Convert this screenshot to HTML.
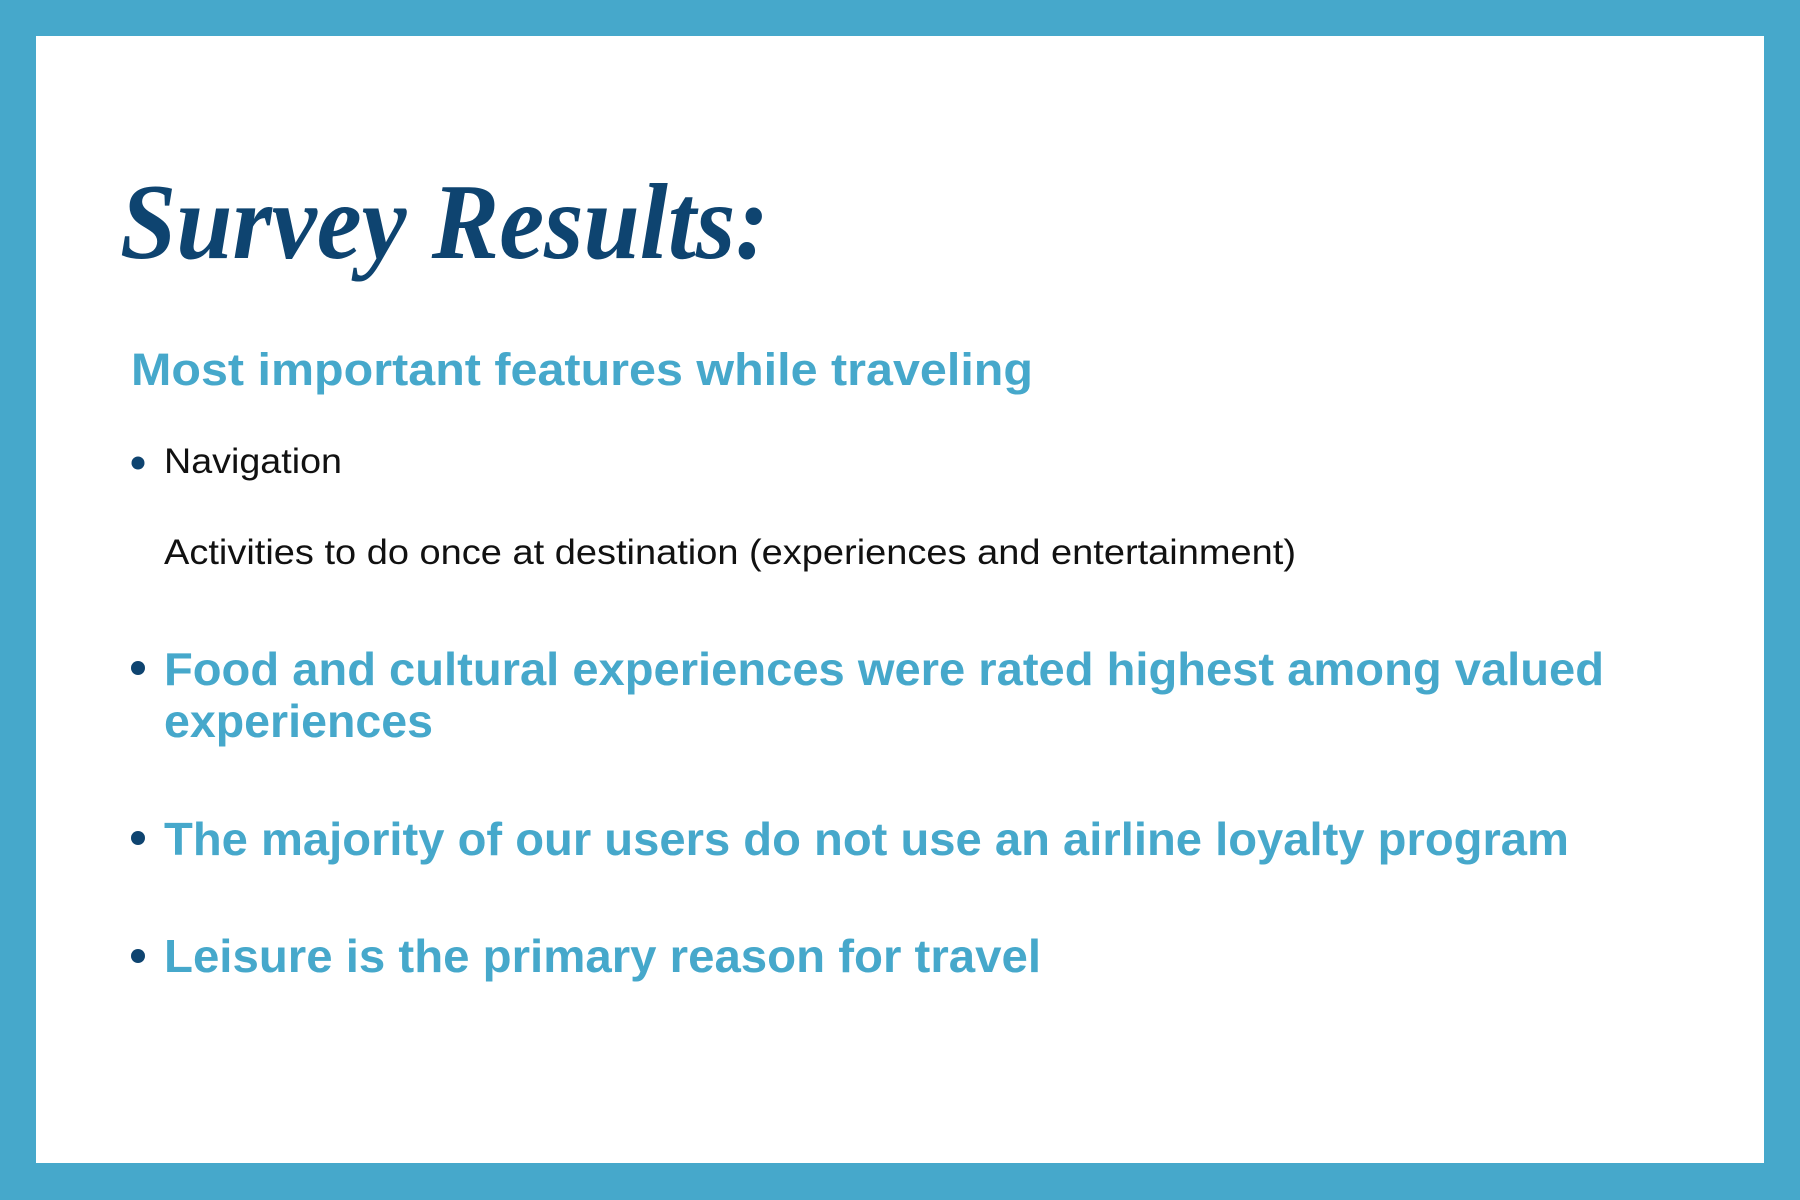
<!DOCTYPE html>
<html><head><meta charset="utf-8"><style>html,body{margin:0;padding:0;width:1800px;height:1200px;overflow:hidden;background:#46a8cb}</style></head>
<body>
<svg width="1800" height="1200" viewBox="0 0 1800 1200" xmlns="http://www.w3.org/2000/svg">
<rect width="1800" height="1200" fill="#46a8cb"/>
<rect x="36" y="36" width="1728" height="1127" fill="#ffffff"/>
<text x="120" y="258" font-family="Liberation Serif, serif" font-weight="bold" font-style="italic" font-size="108" fill="#0e4470" textLength="649" lengthAdjust="spacingAndGlyphs">Survey Results:</text>
<g font-family="Liberation Sans, sans-serif">
<text x="131" y="385" font-size="45" font-weight="bold" fill="#46a8cb" textLength="902" lengthAdjust="spacingAndGlyphs">Most important features while traveling</text>
<circle cx="138" cy="463" r="6.5" fill="#0e4470"/>
<text x="164" y="473" font-size="35" fill="#111" textLength="178" lengthAdjust="spacingAndGlyphs">Navigation</text>
<text x="164" y="564" font-size="35" fill="#111" textLength="1132" lengthAdjust="spacingAndGlyphs">Activities to do once at destination (experiences and entertainment)</text>
<circle cx="138" cy="668" r="7" fill="#0e4470"/>
<text x="164" y="685" font-size="46" font-weight="bold" fill="#46a8cb" textLength="1440" lengthAdjust="spacingAndGlyphs">Food and cultural experiences were rated highest among valued</text>
<text x="164" y="737" font-size="46" font-weight="bold" fill="#46a8cb" textLength="269" lengthAdjust="spacingAndGlyphs">experiences</text>
<circle cx="138" cy="838" r="7" fill="#0e4470"/>
<text x="164" y="855" font-size="46" font-weight="bold" fill="#46a8cb" textLength="1405" lengthAdjust="spacingAndGlyphs">The majority of our users do not use an airline loyalty program</text>
<circle cx="138" cy="956" r="7" fill="#0e4470"/>
<text x="164" y="972" font-size="46" font-weight="bold" fill="#46a8cb" textLength="877" lengthAdjust="spacingAndGlyphs">Leisure is the primary reason for travel</text>
</g>
</svg>
</body></html>
